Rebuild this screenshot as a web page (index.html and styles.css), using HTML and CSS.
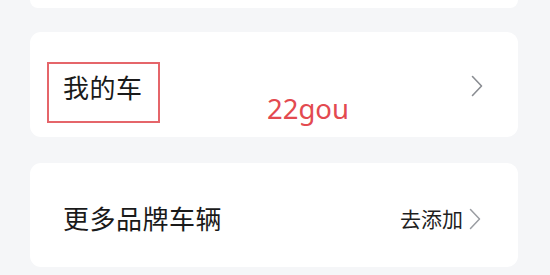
FILE: index.html
```html
<!DOCTYPE html>
<html lang="zh-CN">
<head>
<meta charset="utf-8">
<link rel="stylesheet" href="styles.css">
</head>
<body>
<div class="page">
  <div class="card card-top"></div>
  <div class="card card-mine">
    <div class="mark"><span class="title">我的车</span></div>
    <span class="watermark">22gou</span>
    <svg class="chev" width="12" height="22" viewBox="0 0 12 22"><path d="M1.5 1.5 L10.5 11 L1.5 20.5" fill="none" stroke="#8a8d92" stroke-width="1.6" stroke-linecap="round" stroke-linejoin="round"/></svg>
  </div>
  <div class="card card-more">
    <span class="title">更多品牌车辆</span>
    <div class="action">
      <span class="action-text">去添加</span>
      <svg class="chev" width="12" height="22" viewBox="0 0 12 22"><path d="M1.5 1.5 L10.5 11 L1.5 20.5" fill="none" stroke="#9a9da2" stroke-width="1.5" stroke-linecap="round" stroke-linejoin="round"/></svg>
    </div>
  </div>
</div>
</body>
</html>
```
FILE: styles.css
```css
html, body {
  margin: 0;
  padding: 0;
  background: #f5f6f8;
}
body {
  width: 550px;
  height: 275px;
  overflow: hidden;
  font-family: "Noto Sans CJK SC", "Noto Sans", sans-serif;
  color: #1a1a1a;
}
.page {
  display: flex;
  flex-direction: column;
  padding: 0 32px 0 30px;
}
.card {
  background: #ffffff;
  border-radius: 11px;
  box-sizing: border-box;
}
.card-top {
  height: 8px;
  border-radius: 0 0 11px 11px;
}
.card-mine {
  position: relative;
  margin-top: 24px;
  height: 105px;
  display: flex;
  align-items: center;
  justify-content: space-between;
  padding: 0 35px 0 17px;
}
.mark {
  align-self: flex-end;
  margin-bottom: 14px;
  width: 113px;
  height: 61px;
  box-sizing: border-box;
  border: 2px solid #e5656a;
  padding: 7px 14px 0 14px;
}
.title {
  font-size: 26px;
  line-height: 32px;
  letter-spacing: 0.5px;
  white-space: nowrap;
}
.watermark {
  position: absolute;
  left: 237px;
  top: 61px;
  font-family: "Noto Sans", "Noto Sans CJK SC", sans-serif;
  font-size: 27.5px;
  line-height: 32px;
  color: #e34a50;
}
.chev {
  display: block;
  margin-top: 2px;
}
.card-more {
  margin-top: 26px;
  height: 104px;
  display: flex;
  align-items: center;
  justify-content: space-between;
  padding: 6px 37px 0 33px;
}
.action {
  display: flex;
  align-items: center;
  gap: 6px;
}
.action-text {
  font-size: 21px;
  line-height: 28px;
  color: #1f1f1f;
}
```
